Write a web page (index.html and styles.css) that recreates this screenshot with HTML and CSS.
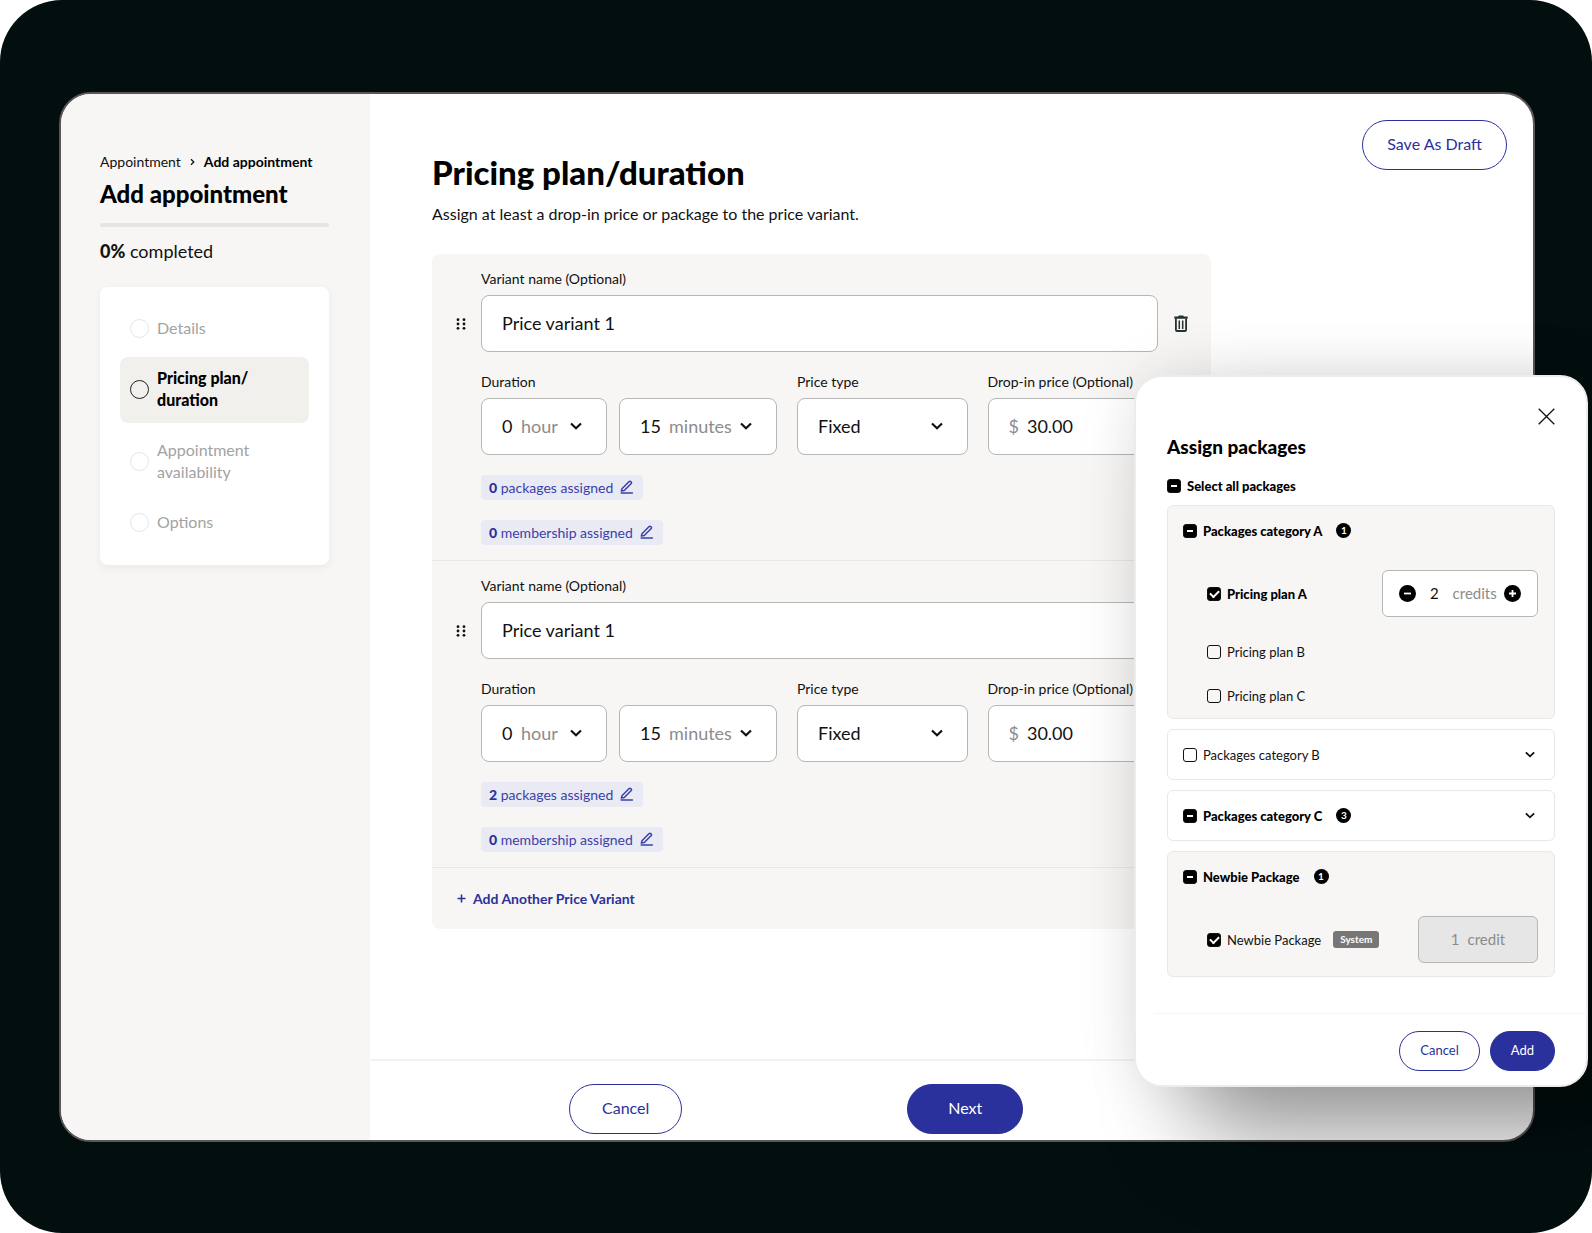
FILE: index.html
```html
<!DOCTYPE html>
<html lang="en">
<head>
  <meta charset="UTF-8">
  <meta name="viewport" content="width=device-width, initial-scale=1.0">
  <title>Pricing plan/duration</title>
  <link rel="stylesheet" href="styles.css">
</head>
<body>
  <!-- shared icons -->
  <svg class="sprite" aria-hidden="true">
    <symbol id="chevron" viewBox="0 0 12 8"><path d="M1 1.500 6 6.200l5-4.700" fill="none" stroke="currentColor" stroke-width="2.200"/></symbol>
    <symbol id="pencil" viewBox="0 0 14 14"><path d="M2 8.800 8.900 1.700a1.500 1.500 0 0 1 2.100 0 1.500 1.500 0 0 1 0 2.100L4.300 10.500l-3 .6zM1.200 13.100h11.200" fill="none" stroke="currentColor" stroke-width="1.500" stroke-linecap="round" stroke-linejoin="round"/></symbol>
    <symbol id="dots" viewBox="0 0 10 12"><g fill="currentColor"><circle cx="2" cy="1.700" r="1.400"/><circle cx="8" cy="1.700" r="1.400"/><circle cx="2" cy="6" r="1.400"/><circle cx="8" cy="6" r="1.400"/><circle cx="2" cy="10.300" r="1.400"/><circle cx="8" cy="10.300" r="1.400"/></g></symbol>
    <symbol id="trash" viewBox="0 0 14 17"><path d="M.3 1.600h3.700L5 .5h4l1 1.100h3.700v2.200H.3z" fill="currentColor"/><path d="M1.900 3.500v11.200c0 .8.500 1.300 1.300 1.300h7.600c.8 0 1.300-.5 1.300-1.300V3.500" fill="none" stroke="currentColor" stroke-width="1.800"/><path d="M5.300 5.500v8.500M8.700 5.500v8.500" fill="none" stroke="currentColor" stroke-width="1.500"/></symbol>
  </svg>

  <div class="stage">
    <div class="window">
      <!-- Sidebar -->
      <aside class="sidebar">
        <nav class="breadcrumb">
          <a href="#">Appointment</a>
          <svg class="crumb-arrow" viewBox="0 0 5 8"><path d="m1 1.200 2.800 2.800L1 6.800" fill="none" stroke="currentColor" stroke-width="1.300"/></svg>
          <b>Add appointment</b>
        </nav>
        <h2 class="sidebar-title">Add appointment</h2>
        <div class="progress"></div>
        <p class="progress-text"><b>0%</b> completed</p>
        <nav class="steps">
          <a class="step" href="#"><i class="step-dot"></i>Details</a>
          <a class="step active" href="#"><i class="step-dot"></i>Pricing plan/<br>duration</a>
          <a class="step" href="#"><i class="step-dot"></i>Appointment<br>availability</a>
          <a class="step" href="#"><i class="step-dot"></i>Options</a>
        </nav>
      </aside>

      <!-- Main -->
      <main class="main">
        <header class="main-header">
          <div class="heading">
            <h1>Pricing plan/duration</h1>
            <p>Assign at least a drop-in price or package to the price variant.</p>
          </div>
          <button class="btn btn-outline">Save As Draft</button>
        </header>

        <div class="variants">
          <section class="variant">
            <label class="label" for="name1">Variant name (Optional)</label>
            <div class="name-row">
              <button class="icon-btn drag" aria-label="Move"><svg><use href="#dots"/></svg></button>
              <input class="box name-input" id="name1" type="text" value="Price variant 1">
              <button class="icon-btn trash" aria-label="Delete"><svg><use href="#trash"/></svg></button>
            </div>
            <div class="fields">
              <div class="field">
                <label class="label" for="hour1">Duration</label>
                <div class="duration">
                  <div class="box box-hour"><select id="hour1"><option>0</option></select><span class="unit">hour</span><svg class="chevron"><use href="#chevron"/></svg></div>
                  <div class="box box-min"><select aria-label="Minutes"><option>15</option></select><span class="unit">minutes</span><svg class="chevron"><use href="#chevron"/></svg></div>
                </div>
              </div>
              <div class="field field-grow">
                <label class="label" for="type1">Price type</label>
                <div class="box box-type"><select id="type1"><option>Fixed</option></select><svg class="chevron"><use href="#chevron"/></svg></div>
              </div>
              <div class="field field-grow">
                <label class="label" for="price1">Drop-in price (Optional)</label>
                <div class="box box-price"><span class="unit">$</span><input id="price1" type="text" value="30.00"></div>
              </div>
            </div>
            <div class="chips">
              <button class="chip"><span><b>0</b> packages assigned</span><svg><use href="#pencil"/></svg></button>
              <button class="chip"><span><b>0</b> membership assigned</span><svg><use href="#pencil"/></svg></button>
            </div>
          </section>

          <section class="variant">
            <label class="label" for="name2">Variant name (Optional)</label>
            <div class="name-row">
              <button class="icon-btn drag" aria-label="Move"><svg><use href="#dots"/></svg></button>
              <input class="box name-input" id="name2" type="text" value="Price variant 1">
              <button class="icon-btn trash" aria-label="Delete"><svg><use href="#trash"/></svg></button>
            </div>
            <div class="fields">
              <div class="field">
                <label class="label" for="hour2">Duration</label>
                <div class="duration">
                  <div class="box box-hour"><select id="hour2"><option>0</option></select><span class="unit">hour</span><svg class="chevron"><use href="#chevron"/></svg></div>
                  <div class="box box-min"><select aria-label="Minutes"><option>15</option></select><span class="unit">minutes</span><svg class="chevron"><use href="#chevron"/></svg></div>
                </div>
              </div>
              <div class="field field-grow">
                <label class="label" for="type2">Price type</label>
                <div class="box box-type"><select id="type2"><option>Fixed</option></select><svg class="chevron"><use href="#chevron"/></svg></div>
              </div>
              <div class="field field-grow">
                <label class="label" for="price2">Drop-in price (Optional)</label>
                <div class="box box-price"><span class="unit">$</span><input id="price2" type="text" value="30.00"></div>
              </div>
            </div>
            <div class="chips">
              <button class="chip"><span><b>2</b> packages assigned</span><svg><use href="#pencil"/></svg></button>
              <button class="chip"><span><b>0</b> membership assigned</span><svg><use href="#pencil"/></svg></button>
            </div>
          </section>

          <button class="add-variant"><svg viewBox="0 0 9 9"><path d="M4.500.5v8M.5 4.500h8" stroke="currentColor" stroke-width="1.600"/></svg>Add Another Price Variant</button>
        </div>

        <footer class="main-footer">
          <button class="btn btn-outline">Cancel</button>
          <button class="btn btn-solid">Next</button>
        </footer>
      </main>
    </div>

    <!-- Assign packages dialog -->
    <div class="modal" role="dialog" aria-labelledby="modal-title">
      <div class="modal-body">
        <button class="close" aria-label="Close"><svg viewBox="0 0 17 17"><path d="m.7.7 15.600 15.600M16.300.7.7 16.300" stroke="currentColor" stroke-width="1.300"/></svg></button>
        <h3 id="modal-title">Assign packages</h3>
        <label class="check strong"><input type="checkbox" data-partial>Select all packages</label>

        <div class="groups">
          <section class="group open">
            <div class="group-head">
              <label class="check strong"><input type="checkbox" data-partial>Packages category A</label>
              <span class="count">1</span>
            </div>
            <div class="plan plan-tall">
              <label class="check strong"><input type="checkbox" checked>Pricing plan A</label>
              <div class="stepper">
                <button class="round" aria-label="Less"><svg viewBox="0 0 17 17"><path d="M5 8.500h7" stroke="#fff" stroke-width="1.800"/></svg></button>
                <input type="text" value="2" aria-label="Credits">
                <span class="unit">credits</span>
                <button class="round" aria-label="More"><svg viewBox="0 0 17 17"><path d="M5 8.500h7M8.500 5v7" stroke="#fff" stroke-width="1.800"/></svg></button>
              </div>
            </div>
            <div class="plan"><label class="check"><input type="checkbox">Pricing plan B</label></div>
            <div class="plan"><label class="check"><input type="checkbox">Pricing plan C</label></div>
          </section>

          <section class="group">
            <div class="group-head">
              <label class="check"><input type="checkbox">Packages category B</label>
              <button class="expand" aria-label="Expand"><svg><use href="#chevron"/></svg></button>
            </div>
          </section>

          <section class="group">
            <div class="group-head">
              <label class="check strong"><input type="checkbox" data-partial>Packages category C</label>
              <span class="count">3</span>
              <button class="expand" aria-label="Expand"><svg><use href="#chevron"/></svg></button>
            </div>
          </section>

          <section class="group open">
            <div class="group-head">
              <label class="check strong"><input type="checkbox" data-partial>Newbie Package</label>
              <span class="count">1</span>
            </div>
            <div class="plan plan-tall">
              <label class="check"><input type="checkbox" checked>Newbie Package</label>
              <span class="tag">System</span>
              <div class="stepper disabled"><span>1</span><span>credit</span></div>
            </div>
          </section>
        </div>
      </div>
      <footer class="modal-footer">
        <button class="btn btn-outline">Cancel</button>
        <button class="btn btn-solid">Add</button>
      </footer>
    </div>
  </div>

  <script>
    // partly selected groups
    document.querySelectorAll('[data-partial]').forEach(box => {
      box.indeterminate = true;
    });
  </script>
</body>
</html>
```
FILE: styles.css
```css
* {
  box-sizing: border-box;
}

body {
  margin: 0;
  background: #fff;
  font-family: Lato, sans-serif;
  font-size: 16px;
  color: #111;
}

h1, h2, h3, p {
  margin: 0;
}

h1, h2, h3, b {
  font-weight: 900;
}

a {
  color: inherit;
  text-decoration: none;
}

button, input, select {
  font: inherit;
  color: inherit;
  margin: 0;
  padding: 0;
  border: 0;
  background: none;
}

button {
  cursor: pointer;
}

select {
  appearance: none;
}

svg {
  display: block;
}

.sprite {
  position: absolute;
  width: 0;
  height: 0;
}

.stage {
  position: relative;
  display: flex;
  min-height: 100vh;
  padding: 92px 57px 91px 59px;
  border-radius: 62px;
  background: #030f0f;
  overflow: hidden;
}

.window {
  flex: 1;
  display: flex;
  border: 2px solid #5b5758;
  border-radius: 32px;
  background: #fff;
  overflow: hidden;
}

/* Sidebar */
.sidebar {
  width: 309px;
  flex-shrink: 0;
  padding: 58px 41px 0 39px;
  background: #f7f6f4;
}

.breadcrumb {
  display: flex;
  align-items: center;
  gap: 9px;
  font-size: 14px;
  line-height: 20px;
  white-space: nowrap;
}

.crumb-arrow {
  width: 5px;
  height: 8px;
}

.breadcrumb b {
  color: #000;
  font-weight: 700;
}

.sidebar-title {
  margin-top: 7px;
  font-size: 24px;
  line-height: 30px;
  color: #000;
}

.progress {
  height: 4px;
  margin-top: 14px;
  border-radius: 2px;
  background: #e6e5e3;
}

.progress-text {
  margin-top: 12px;
  font-size: 18px;
  line-height: 24px;
}

.steps {
  display: flex;
  flex-direction: column;
  gap: 6px;
  margin-top: 24px;
  padding: 20px;
  border-radius: 8px;
  background: #fff;
  box-shadow: 0 3px 8px rgba(0, 0, 0, 0.05);
}

.step {
  display: flex;
  align-items: center;
  gap: 8px;
  padding: 10px 10px 12px;
  border-radius: 8px;
  line-height: 22px;
  color: #a3a3a3;
}

.step-dot {
  width: 19px;
  height: 19px;
  flex-shrink: 0;
  border: 1px solid #e6e6e6;
  border-radius: 50%;
}

.step.active {
  background: #f1f0ec;
  color: #000;
  font-weight: 900;
}

.active .step-dot {
  border-color: #222;
}

/* Main */
.main {
  flex: 1;
  display: flex;
  flex-direction: column;
  min-width: 0;
}

.main-header {
  display: flex;
  justify-content: space-between;
  align-items: flex-start;
  padding: 26px 26px 28px 62px;
}

.heading {
  padding-top: 32px;
}

.heading h1 {
  font-size: 33px;
  line-height: 40px;
  color: #000;
}

.heading p {
  margin-top: 9px;
  line-height: 25px;
}

.btn {
  height: 50px;
  padding: 0 32px 3px;
  border: 1px solid #2a319c;
  border-radius: 25px;
  color: #2a319c;
  white-space: nowrap;
}

.btn-outline {
  padding: 0 24px 3px;
}

.btn-solid {
  background: #2a319c;
  color: #fff;
}

.variants {
  margin: 0 322px 0 62px;
  border-radius: 8px;
  background: #f7f6f4;
}

.variant {
  padding: 16px 53px 15px 49px;
  border-bottom: 1px solid #e8e7e5;
}

.label {
  display: block;
  margin-bottom: 7px;
  font-size: 14px;
  line-height: 18px;
  white-space: nowrap;
}

.box {
  display: flex;
  align-items: center;
  height: 57px;
  padding: 0 20px 1px;
  border: 1px solid #b5b6b6;
  border-radius: 8px;
  background: #fff;
  font-size: 18px;
}

.unit {
  color: #8c8c8c;
}

.name-row {
  display: flex;
  align-items: center;
  margin: 0 -30px 21px -25px;
}

.name-input {
  flex: 1;
  min-width: 0;
}

.icon-btn svg {
  width: 100%;
  height: 100%;
}

.drag {
  width: 10px;
  height: 12px;
  margin-right: 15px;
}

.trash {
  width: 14px;
  height: 17px;
  margin-left: 16px;
  color: #263232;
}

.fields {
  display: flex;
  gap: 20px;
}

.field-grow {
  flex: 1;
  min-width: 0;
}

.duration {
  display: flex;
  gap: 12px;
}

.duration .box {
  gap: 8px;
}

.chevron {
  width: 12px;
  height: 8px;
  flex-shrink: 0;
  margin-left: auto;
}

.box-hour {
  width: 126px;
  padding-right: 24px;
}

.box-min {
  width: 158px;
  padding-right: 24px;
}

.box-type {
  padding-right: 24px;
}

.box-type select {
  flex: 1;
}

.box-price {
  gap: 8px;
}

.box-price input {
  width: 100%;
}

.chips {
  display: flex;
  flex-direction: column;
  align-items: flex-start;
  gap: 20px;
  margin-top: 20px;
}

.chip {
  display: flex;
  align-items: center;
  gap: 7px;
  height: 25px;
  padding: 0 9px 1px 8px;
  border-radius: 4px;
  background: #eaeaf5;
  color: #3a41a8;
  font-size: 14px;
}

.chip b {
  color: #2a319c;
}

.chip svg {
  width: 14px;
  height: 14px;
}

.add-variant {
  display: flex;
  align-items: center;
  gap: 7px;
  height: 61px;
  padding: 0 25px;
  color: #2a319c;
  font-size: 14px;
  font-weight: 700;
}

.add-variant svg {
  width: 9px;
  height: 9px;
}

.main-footer {
  display: flex;
  gap: 225px;
  margin-top: auto;
  padding: 23px 199px 6px;
  border-top: 2px solid #f2f2f2;
}

.main-footer .btn-outline {
  padding: 0 32px 3px;
}

.main-footer .btn-solid {
  padding: 0 40px 3px;
}

/* Dialog */
.modal {
  position: absolute;
  top: 375px;
  right: 4px;
  width: 454px;
  border: 2px solid #ececec;
  border-radius: 28px;
  background: #fff;
  box-shadow: 60px 50px 90px rgba(0, 0, 0, 0.38), 0 0 60px rgba(0, 0, 0, 0.1);
}

.modal-body {
  display: flex;
  flex-direction: column;
  align-items: flex-start;
  padding: 31px 31px 36px;
}

.close {
  align-self: flex-end;
  width: 17px;
  height: 17px;
}

.modal h3 {
  margin: 10px 0 17px;
  font-size: 19px;
  line-height: 24px;
  color: #000;
}

.check {
  display: flex;
  align-items: center;
  gap: 6px;
  font-size: 13px;
  line-height: 20px;
  white-space: nowrap;
}

.strong {
  font-weight: 900;
  color: #000;
}

.check input {
  appearance: none;
  display: grid;
  place-items: center;
  width: 14px;
  height: 14px;
  border: 1px solid #111;
  border-radius: 3px;
}

.check input:checked,
.check input:indeterminate {
  background: #000;
}

.check input:indeterminate::after {
  content: "";
  width: 6px;
  height: 2px;
  background: #fff;
}

.check input:checked::after {
  content: "";
  width: 7px;
  height: 4px;
  margin-bottom: 2px;
  border: solid #fff;
  border-width: 0 0 2px 2px;
  transform: rotate(-45deg);
}

.groups {
  display: flex;
  flex-direction: column;
  align-self: stretch;
  gap: 10px;
  margin-top: 9px;
}

.group {
  border: 1px solid #e8e8e8;
  border-radius: 6px;
}

.group.open {
  background: #f7f6f4;
}

.group-head {
  display: flex;
  align-items: center;
  gap: 14px;
  height: 49px;
  padding: 0 15px;
}

.count {
  width: 15px;
  height: 15px;
  border-radius: 50%;
  background: #000;
  color: #fff;
  font-size: 10px;
  font-weight: 700;
  line-height: 15px;
  text-align: center;
}

.expand {
  margin-left: auto;
  padding: 4px;
}

.expand svg {
  width: 10px;
  height: 7px;
}

.plan {
  display: flex;
  align-items: center;
  gap: 12px;
  height: 44px;
  padding: 0 16px 0 39px;
}

.plan-tall {
  height: 75px;
  padding-top: 2px;
}

.stepper {
  display: flex;
  align-items: center;
  justify-content: space-between;
  width: 156px;
  height: 47px;
  margin-left: auto;
  padding: 0 16px 1px;
  border: 1px solid #b5b6b6;
  border-radius: 6px;
  background: #fff;
  font-size: 15px;
}

.stepper input {
  width: 22px;
  text-align: center;
}

.round {
  width: 17px;
  height: 17px;
  border-radius: 50%;
  background: #000;
}

.stepper.disabled {
  justify-content: center;
  gap: 8px;
  width: 120px;
  background: #e6e6e6;
  color: #8c8c8c;
}

.tag {
  padding: 0 7px;
  border-radius: 3px;
  background: #777;
  color: #fff;
  font-size: 10px;
  font-weight: 700;
  line-height: 17px;
}

.modal-footer {
  display: flex;
  justify-content: flex-end;
  gap: 10px;
  margin-left: 18px;
  padding: 17px 31px 14px 0;
  border-top: 1px solid #f5f5f5;
}

.modal-footer .btn {
  height: 40px;
  padding: 0 20px 2px;
  border-radius: 20px;
  font-size: 13px;
}
```
